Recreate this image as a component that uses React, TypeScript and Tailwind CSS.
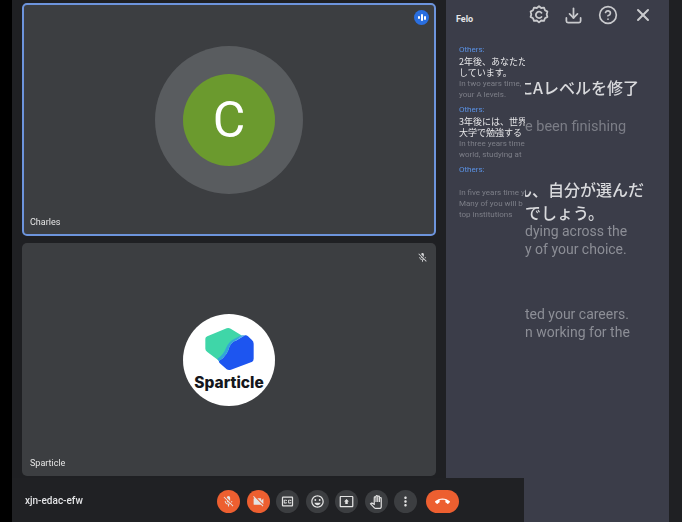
import { MdMicOff, MdVideocamOff, MdOutlineClosedCaption, MdOutlineEmojiEmotions, MdOutlinePresentToAll, MdOutlinePanTool, MdMoreVert, MdCallEnd } from 'react-icons/md';
import { LuDownload, LuCircleHelp, LuX } from 'react-icons/lu';

const GearIcon = () => (
  <svg width="20" height="20" viewBox="0 0 20 20" fill="none" stroke="#c9cacd" strokeWidth="1.8">
    <path d="M10 1.200 12.200 3l2.800-.4 1 2.600 2.400 1.400-.7 2.700.7 2.600-2.400 1.400-1 2.600-2.800-.4-2.200 1.900-2.200-1.900-2.800.4-1-2.600-2.400-1.400.7-2.600-.7-2.700L4 5.200l1-2.600 2.800.4z" strokeLinejoin="round" />
    <path d="M12.500 7.800A3.200 3.200 0 1 0 12.500 12" strokeLinecap="round" />
  </svg>
);

const SparticleMark = () => (
  <svg width="50" height="45" viewBox="102 65 150 135">
    <path d="M112 93 170 69Q176 67 182 70L214 90 200 103Q184 110 178 125 172 150 148 167L112 140Q106 136 106 130V100Q106 96 112 93Z" fill="#3fd6a8" />
    <path d="M225 90Q230 89 234 93L245 103Q251 108 251 115V160Q251 167 245 170L183 193Q176 196 170 192L148 172Q144 168 150 165 172 150 178 125 184 110 200 105Z" fill="#1d55f0" />
    <path d="M214 90 225 90 200 105Q184 110 178 125 172 150 150 165L146 168 142 160Q160 150 168 128 176 108 194 100Z" fill="#2f9fdf" opacity="0.85" />
  </svg>
);

const controls = [
  { icon: <MdOutlineClosedCaption size={15} />, key: 'captions' },
  { icon: <MdOutlineEmojiEmotions size={15} />, key: 'emoji' },
  { icon: <MdOutlinePresentToAll size={15} />, key: 'present' },
  { icon: <MdOutlinePanTool size={14} />, key: 'hand' },
  { icon: <MdMoreVert size={15} />, key: 'more' },
];

const messages = [
  { ja: ['2年後、あなたた', 'しています。'], en: ['In two years time,', 'your A levels.'] },
  { ja: ['3年後には、世界', '大学で勉強する'], en: ['In three years time', 'world, studying at'] },
  { ja: ['\u00a0'], en: ['In five years time y', 'Many of you will b', 'top institutions'] },
];

const App = () => {
  return (
    <div className="relative flex h-[522px] w-[682px] overflow-hidden bg-[#1f2023] font-['Roboto',sans-serif]">
      <div className="h-full w-3 shrink-0 bg-black" />

      <div className="flex w-[434px] shrink-0 flex-col gap-[7px] pl-[10px] pr-[10px] pt-[3px]">
        <div className="relative flex h-[233px] items-center justify-center rounded-[5px] border-2 border-[#6d94dc] bg-[#3c3e41]">
          <div className="flex h-[148px] w-[148px] items-center justify-center rounded-full bg-[#595c5f]">
            <div className="flex h-[92px] w-[92px] items-center justify-center rounded-full bg-[#6b9a2e]">
              <span className="text-[50px] leading-none text-white">C</span>
            </div>
          </div>
          <div className="absolute right-[5px] top-[5px] flex h-[15px] w-[15px] items-center justify-center gap-[1px] rounded-full bg-[#2a6fe0] blur-[0.4px]">
            <span className="h-[3px] w-[2px] rounded-full bg-white" />
            <span className="h-[7px] w-[2px] rounded-full bg-white" />
            <span className="h-[4px] w-[2px] rounded-full bg-white" />
          </div>
          <span className="absolute bottom-[5px] left-[6px] text-[9px] text-[#e6e6e6] blur-[0.3px]">Charles</span>
        </div>

        <div className="relative flex h-[233px] items-center justify-center rounded-[5px] bg-[#3c3e41]">
          <div className="flex h-[92px] w-[92px] flex-col items-center rounded-full bg-white pt-[13px]">
            <SparticleMark />
            <span className="mt-[3px] font-['Inter',sans-serif] text-[15.500px] font-extrabold leading-none text-[#15171c]">Sparticle</span>
          </div>
          <MdMicOff size={11} className="absolute right-[8px] top-[9px] text-[#d5d6d8] blur-[0.4px]" />
          <span className="absolute bottom-[6px] left-[8px] text-[9px] text-[#e6e6e6] blur-[0.3px]">Sparticle</span>
        </div>
      </div>

      <div className="flex w-[223px] shrink-0 flex-col bg-[#3b3d49]">
        <div className="relative flex h-[30px] items-center justify-end pr-[16px]">
          <span className="absolute left-[10px] top-[13px] text-[9px] font-bold text-[#e4e5e8]">Felo</span>
          <div className="flex items-center gap-[15px] text-[#c9cacd]">
            <GearIcon />
            <LuDownload size={19} strokeWidth={2.200} />
            <LuCircleHelp size={20} />
            <LuX size={20} strokeWidth={2.400} />
          </div>
        </div>
        <div className="flex flex-1">
          <div className="w-[79px] shrink-0 overflow-hidden whitespace-nowrap pl-[13px] pt-[14px] blur-[0.4px]">
            {messages.map((m) => (
              <div key={m.en[0]} className="mb-[4px]">
                <p className="text-[8px] leading-[12px] text-[#5b93e6]">Others:</p>
                {m.ja.map((line, i) => (
                  <p key={i} className="font-['Noto_Sans_CJK_JP',sans-serif] text-[9px] leading-[11px] text-[#e8e8ea]">
                    {line}
                  </p>
                ))}
                {m.en.map((line) => (
                  <p key={line} className="text-[8px] leading-[11px] text-[#7d7f88]">{line}</p>
                ))}
              </div>
            ))}
          </div>
          <div className="flex-1 overflow-hidden whitespace-nowrap pl-[3px] pt-[46px] text-[14px] blur-[0.6px]">
            <p className="-ml-[11px] font-['Noto_Sans_CJK_JP',sans-serif] text-[16px] font-medium leading-[22px] text-[#d9dadd]">にAレベルを修了</p>
            <p className="-ml-[3px] mt-[20px] text-[14.500px] leading-[18px] text-[#7b7d86]">e been finishing</p>
            <p className="-ml-[12px] mt-[42px] font-['Noto_Sans_CJK_JP',sans-serif] text-[16px] font-medium leading-[23px] text-[#d9dadd]">ん、自分が選んだ</p>
            <p className="-ml-[3px] font-['Noto_Sans_CJK_JP',sans-serif] text-[16px] font-medium leading-[22px] text-[#d9dadd]">でしょう。</p>
            <p className="-ml-[3px] -mt-[1px] leading-[18px] text-[#8c8e96]">dying across the</p>
            <p className="-ml-[3px] leading-[18px] text-[#8c8e96]">y of your choice.</p>
            <p className="-ml-[3px] mt-[47px] leading-[18px] text-[#8c8e96]">ted your careers.</p>
            <p className="-ml-[3px] leading-[18px] text-[#8c8e96]">n working for the</p>
          </div>
        </div>
      </div>

      <div className="absolute bottom-0 left-3 flex h-[44px] w-[512px] items-center bg-[#202124]">
        <span className="ml-[13px] text-[10px] font-medium text-[#e2e3e5] blur-[0.3px]">xjn-edac-efw</span>
        <div className="absolute left-[205px] top-[12px] flex items-center gap-[6.500px] text-[#e3e3e3]">
          <div className="flex h-[23px] w-[23px] items-center justify-center rounded-full bg-[#ed5f30]"><MdMicOff size={13} /></div>
          <div className="flex h-[23px] w-[23px] items-center justify-center rounded-full bg-[#ed5f30]"><MdVideocamOff size={13} /></div>
          {controls.map((c) => (
            <div key={c.key} className="flex h-[23px] w-[23px] items-center justify-center rounded-full bg-[#3c3e41]">{c.icon}</div>
          ))}
          <div className="ml-[2px] flex h-[23px] w-[33px] items-center justify-center rounded-full bg-[#ed5f30] text-white"><MdCallEnd size={15} /></div>
        </div>
      </div>
    </div>
  );
};

export default App;
